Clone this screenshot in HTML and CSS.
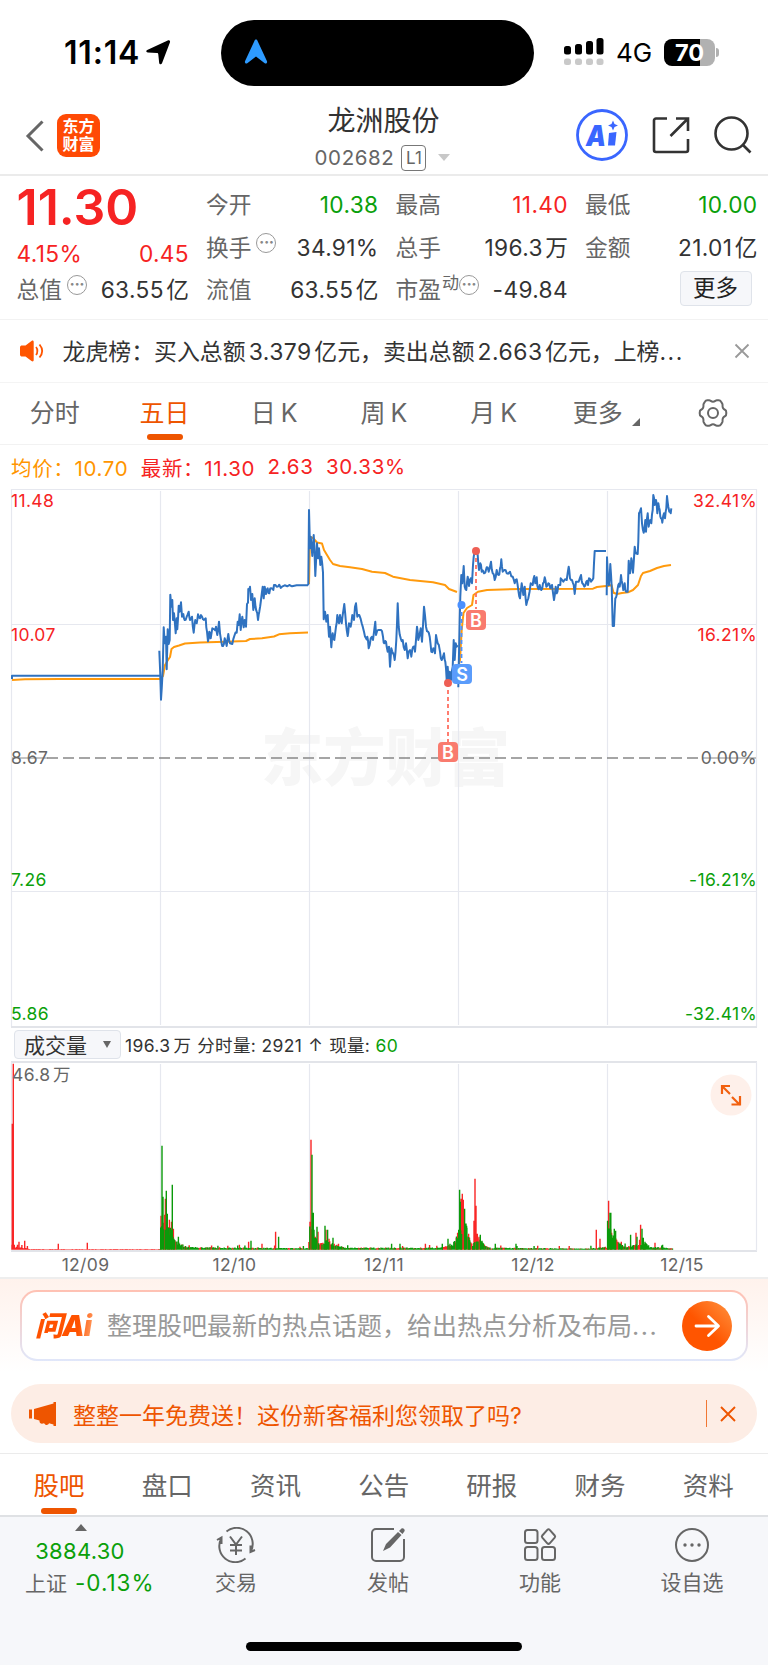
FILE: index.html
```html
<!DOCTYPE html>
<html lang="zh-CN">
<head>
  <meta charset="UTF-8">
  <title>龙洲股份 002682</title>
  <link rel="stylesheet" href="styles.css">
</head>
<body>

  <!-- Status bar -->
  <div class="status">
    <div class="clock">11:14
      <svg width="25" height="25" viewBox="0 0 25 25"><path d="M24 2.200 16 23.200c-.6 1.500-2.600 1.300-2.800-.2l-.9-8.600c-.1-.9-.6-1.300-1.400-1.300L1.800 12.600c-1.700-.2-2-1.800-.6-2.500L21.700.500c1.500-.6 2.700.3 2.300 1.700z"/></svg>
    </div>
    <div class="island">
      <svg width="24" height="26" viewBox="0 0 24 26"><path fill="#2e9bff" d="M12 .5c.9 0 1.300.6 1.700 1.700L22.900 22c.8 2-.8 3.300-2.500 2L12 17.500 3.600 24c-1.700 1.300-3.300 0-2.500-2L10.300 2.200C10.700 1.100 11.100.5 12 .5z"/></svg>
    </div>
    <div class="signal">
      <svg width="41" height="28" viewBox="0 0 41 28">
        <g fill="#000"><rect x="0" y="8" width="7" height="8.500" rx="2.500"/><rect x="11" y="6" width="7" height="10.500" rx="2.500"/><rect x="22" y="3" width="7" height="13.500" rx="2.500"/><rect x="32.500" y="0" width="7" height="16.500" rx="2.500"/></g>
        <g fill="#c9c9c9"><rect x="0" y="20.500" width="7" height="6.500" rx="2.500"/><rect x="11" y="20.500" width="7" height="6.500" rx="2.500"/><rect x="22" y="20.500" width="7" height="6.500" rx="2.500"/><rect x="32.500" y="20.500" width="7" height="6.500" rx="2.500"/></g>
      </svg>
      <span class="net">4G</span>
      <span class="battery">70</span><span class="nub"></span>
    </div>
  </div>

  <!-- Title bar -->
  <div class="navbar">
    <div class="nav-left">
      <svg width="20" height="34" viewBox="0 0 20 34"><path d="M17.500 2.500 3 17l14.500 14.500" fill="none" stroke="#666" stroke-width="3"/></svg>
      <div class="logo">东方<br>财富</div>
    </div>
    <div class="nav-title">
      <h1>龙洲股份</h1>
      <p>002682 <span class="level">L1</span><i class="caret"></i></p>
    </div>
    <div class="nav-right">
      <svg width="52" height="52" viewBox="0 0 52 52"><circle cx="26" cy="26" r="24.500" fill="#fff" stroke="#3a66ff" stroke-width="2.800"/><text x="10" y="36.500" class="ai" textLength="20" lengthAdjust="spacingAndGlyphs">A</text><path d="m33 24 7.500-1-1.500 13.500h-7z" fill="#3a66ff"/><path d="m37 11.500 1.500 3.500 3.500 1.500-3.500 1.500-1.500 3.500-1.500-3.500-3.500-1.500 3.500-1.500z" fill="#3a66ff"/></svg>
      <svg width="38" height="38" viewBox="0 0 38 38" fill="none" stroke="#333" stroke-width="2.600"><path d="M15 2.500H4a2 2 0 0 0-2 2V34a2 2 0 0 0 2 2h30a2 2 0 0 0 2-2V23M24 2.500h12V15M36 2.500 18.500 20"/></svg>
      <svg width="38" height="38" viewBox="0 0 38 38" fill="none" stroke="#333" stroke-width="2.600"><circle cx="17.500" cy="17.500" r="16"/><path d="m29 29 7.500 7.500"/></svg>
    </div>
  </div>

  <!-- Quote -->
  <div class="quote">
    <div class="col main">
      <div class="price">11.30</div>
      <div class="row change"><b>4.15%</b><b>0.45</b></div>
      <div class="row"><span>总值<i class="more-dot">···</i></span><b>63.55<em>亿</em></b></div>
    </div>
    <div class="col">
      <div class="row"><span>今开</span><b class="down">10.38</b></div>
      <div class="row"><span>换手<i class="more-dot">···</i></span><b>34.91%</b></div>
      <div class="row"><span>流值</span><b>63.55<em>亿</em></b></div>
    </div>
    <div class="col">
      <div class="row"><span>最高</span><b class="up">11.40</b></div>
      <div class="row"><span>总手</span><b>196.3<em>万</em></b></div>
      <div class="row"><span>市盈<sup>动</sup><i class="more-dot tight">···</i></span><b>-49.84</b></div>
    </div>
    <div class="col">
      <div class="row"><span>最低</span><b class="down">10.00</b></div>
      <div class="row"><span>金额</span><b>21.01<em>亿</em></b></div>
      <div class="row end"><button class="more-btn">更多</button></div>
    </div>
  </div>

  <!-- News strip -->
  <div class="news">
    <svg width="26" height="22" viewBox="0 0 26 22"><path fill="#ff5500" d="M1 7.500C1 6 2 5.500 3 5.500h3.500L12.500 1c1.200-.9 2.200-.4 2.200 1v18c0 1.400-1 1.900-2.200 1l-6-4.500H3c-1 0-2-.5-2-2z"/><path d="M17 7c1.800 2 1.800 6 0 8M20.500 4.500c3.300 4 3.300 9 0 13" fill="none" stroke="#ff5500" stroke-width="1.800"/></svg>
    <p>龙虎榜：买入总额<em>3.379</em>亿元，卖出总额<em>2.663</em>亿元，上榜<span class="dots">...</span></p>
    <svg class="x" width="16" height="16" viewBox="0 0 16 16"><path d="m1.500 1.500 13 13m0-13-13 13" stroke="#999" stroke-width="1.800"/></svg>
  </div>

  <!-- Period tabs -->
  <div class="periods">
    <span>分时</span>
    <span class="active">五日</span>
    <span>日<em>K</em></span>
    <span>周<em>K</em></span>
    <span>月<em>K</em></span>
    <span class="drop">更多<i class="corner"></i></span>
    <span><svg width="32" height="30" viewBox="0 0 32 30" fill="none" stroke="#666" stroke-width="2"><path d="M10.200 2.200h2c1.300 0 1.800 1.500 3.800 1.500s2.500-1.500 3.800-1.500h2c1.200 0 1.800.6 2.300 1.500l1.200 2c.7 1.300-.3 2.300.7 4.300s2.400 1.500 3 2.700c.4 1.400.4 3.200 0 4.600-.6 1.200-2 .7-3 2.700s0 3-.7 4.300l-1.200 2c-.5.900-1.100 1.500-2.300 1.500h-2c-1.300 0-1.800-1.500-3.800-1.500s-2.500 1.500-3.800 1.500h-2c-1.200 0-1.800-.6-2.300-1.500l-1.200-2c-.7-1.300.3-2.300-.7-4.300s-2.400-1.500-3-2.700c-.4-1.400-.4-3.200 0-4.600.6-1.200 2-.7 3-2.700s0-3 .7-4.300l1.200-2c.5-.9 1.100-1.500 2.300-1.500z"/><circle cx="16" cy="15" r="5"/></svg></span>
  </div>

  <div class="legend">
    <span class="avg">均价：10.70</span><span>最新：11.30</span><span>2.63</span><span>30.33%</span>
  </div>

  <!-- Five day price chart -->
  <svg class="chart" width="768" height="541" viewBox="0 488 768 541">
    <text x="261" y="781" class="watermark" textLength="249" lengthAdjust="spacingAndGlyphs">东方财富</text>
    <g class="grid">
      <path d="M11.500 489.500H757M11.500 624.500H757M11.500 891.500H757M11.500 489v538M756.500 489v538"/>
      <path d="M160.500 491v534M309.500 491v534M458.500 491v534M607.500 491v534"/>
      <path class="frame" d="M11 1027H757"/>
    </g>
    <path class="zero" d="M47 758H700"/>
    <path class="zero solid" d="M12 758h36M702 758h54"/>
    <g class="avg-line">
      <polyline points="12,680 25,679.300 60,679 160,679"/>
      <polyline points="160,679 163,676 165,665 168,660 170,657 171.500,649 174,647 179,645.500 185,643.500 200,642.500 225,641.800 246,641 250,639 262,638.300 274,636.500 279,634.300 290,633.200 308,632.500"/>
      <polyline points="309,584 310,537 313,538 317,542.500 322,543.500 324,550 330,560 333,564 340,566 350,567.300 362,569 372,571.700 385,573 393,576.700 410,580 433,582.300 445,585 449,589 457,592"/>
      <polyline points="458,668 460,660 461.700,630 463.500,613 467,608 472,605 473.500,595 478,591.700 487,590 520,589 593,588.700 597,587 606,586"/>
      <polyline points="607,586.300 611.500,585 613.500,592.700 617,594 622,593 628,592.300 633,590 638,585 641,576 643,573 650,571 657,568 664,566 671,565"/>
    </g>
    <g class="price-line" id="priceLines"></g>
    <g class="labels">
      <g class="up"><text x="11" y="507">11.48</text><text x="11" y="641">10.07</text><text x="757" y="507" class="r">32.41%</text><text x="757" y="641" class="r">16.21%</text></g>
      <g><text x="11" y="764">8.67</text><text x="757" y="764" class="r">0.00%</text></g>
      <g class="down"><text x="11" y="886">7.26</text><text x="11" y="1020">5.86</text><text x="757" y="886" class="r">-16.21%</text><text x="757" y="1020" class="r">-32.41%</text></g>
    </g>
    <!-- trade marks -->
    <g class="marks">
      <path d="M476 551v58M448 683v60" stroke="#ff6f61"/>
      <path d="M461.500 605v58" stroke="#4a90ff"/>
      <circle cx="476" cy="551" r="4" fill="#ee5f55"/><circle cx="448" cy="683" r="4" fill="#ee5f55"/><circle cx="461.500" cy="605" r="4" fill="#4a90ff"/>
      <rect x="466" y="610" width="20" height="20" rx="4" fill="#f97b6e"/><text x="476" y="626.500">B</text>
      <rect x="438" y="742" width="20" height="20" rx="4" fill="#f97b6e"/><text x="448" y="758.500">B</text>
      <rect x="452" y="664" width="20" height="20" rx="4" fill="#5a9cfb"/><text x="462" y="680.500">S</text>
    </g>
  </svg>

  <div class="vol-head">
    <button class="select">成交量<i></i></button>
    <span>196.3<em>万</em></span><span>分时量: 2921</span><span>↑</span><span>现量: <b class="down">60</b></span>
  </div>

  <!-- Volume -->
  <svg class="volume" width="768" height="216" viewBox="0 1061 768 216">
    <g class="grid">
      <path class="frame" d="M11 1062H757M11 1251H757"/>
      <path d="M11.500 1062v189M756.500 1062v189M160.500 1064v186M309.500 1064v186M458.500 1064v186M607.500 1064v186"/>
    </g>
    <path class="bars" id="volUp" stroke="#f92626"/>
    <path class="bars" id="volDown" stroke="#0a9a0a"/>
    <g class="labels"><text x="12" y="1081">46.8</text><text x="53" y="1081">万</text>
      <g class="dates"><text x="85.500" y="1270.500">12/09</text><text x="234.500" y="1270.500">12/10</text><text x="384" y="1270.500">12/11</text><text x="533" y="1270.500">12/12</text><text x="682" y="1270.500">12/15</text></g>
    </g>
    <circle cx="731" cy="1095" r="20.500" fill="#fef0ea"/>
    <path d="M722 1094v-8h8M722 1086l8 8M732 1097l8 8M740 1096v8.500h-8.500" fill="none" stroke="#f2600f" stroke-width="2.200"/>
  </svg>

  <!-- Ask AI -->
  <div class="ask-wrap">
    <div class="ask">
      <strong>问Ai</strong>
      <p>整理股吧最新的热点话题，给出热点分析及布局<span class="dots">...</span></p>
      <div class="go"><svg width="28" height="24" viewBox="0 0 28 24" fill="none" stroke="#fff" stroke-width="2.800" stroke-linecap="round" stroke-linejoin="round"><path d="M3 12h22M15.500 2.500 25.500 12l-10 9.500"/></svg></div>
    </div>
  </div>

  <div class="promo">
    <svg width="28" height="26" viewBox="0 0 28 26" fill="#ee5500"><path d="M0 8.500h3v9H0zM5 8 24.500 2.500V1H27v24h-2.500v-1.500L20 22.200c-.5 1.500-2 2-3.500 1.500l-1.500-1.500-2 .5c-1.500 0-2.500-1-2.500-2.500v-.8L5 18z"/></svg>
    <p>整整一年免费送！这份新客福利您领取了吗?</p>
    <i></i>
    <svg width="16" height="16" viewBox="0 0 16 16"><path d="m1 1 14 14m0-14L1 15" stroke="#ee5500" stroke-width="1.900"/></svg>
  </div>

  <div class="sections">
    <span class="active">股吧</span><span>盘口</span><span>资讯</span><span>公告</span><span>研报</span><span>财务</span><span>资料</span>
  </div>

  <!-- Bottom bar -->
  <div class="bottom">
    <div class="index">
      <i></i>
      <b>3884.30</b>
      <p>上证 <b>-0.13%</b></p>
    </div>
    <div class="tool">
      <svg width="40" height="36" viewBox="0 0 40 36" fill="none" stroke="#666" stroke-width="2"><path d="M10.500 4.500A16 16 0 0 1 35 24l-.5 1M29.500 31.500A16 16 0 0 1 5 12l.5-1M1 13l4.500-2.500V17M39 23l-4.500 2V18.500M14 9.500l6 8 6-8M14 18h12M14 23.500h12M20 18v10"/></svg>
      <span>交易</span>
    </div>
    <div class="tool">
      <svg width="36" height="36" viewBox="0 0 36 36" fill="none" stroke="#666" stroke-width="2"><path d="M24 2H6a4 4 0 0 0-4 4v24a4 4 0 0 0 4 4h24a4 4 0 0 0 4-4V12"/><path fill="#666" stroke="none" d="m13 24 3-7L28 5l3.500 3L20 20.500zM29 4l2.500-2.500c1.500-1 4 1 3 2.700L32.500 7z"/></svg>
      <span>发帖</span>
    </div>
    <div class="tool">
      <svg width="36" height="36" viewBox="0 0 36 36" fill="none" stroke="#666" stroke-width="2"><rect x="3" y="3" width="12.500" height="13" rx="2.500"/><rect x="3" y="20" width="12.500" height="13" rx="2.500"/><rect x="20" y="20" width="13" height="13" rx="2.500"/><path d="m25.300 2.900-5 5.600a1.700 1.700 0 0 0 0 2.200l5 5.600a1.700 1.700 0 0 0 2.400 0l5-5.600a1.700 1.700 0 0 0 0-2.200l-5-5.600a1.700 1.700 0 0 0-2.400 0z"/></svg>
      <span>功能</span>
    </div>
    <div class="tool">
      <svg width="36" height="36" viewBox="0 0 36 36" fill="#666"><circle cx="18" cy="18" r="16" fill="none" stroke="#666" stroke-width="2"/><circle cx="11" cy="18" r="1.700"/><circle cx="18" cy="18" r="1.700"/><circle cx="25" cy="18" r="1.700"/></svg>
      <span>设自选</span>
    </div>
    <div class="home"></div>
  </div>

  <script src="chart.js"></script>
</body>
</html>
```
FILE: styles.css
```css
* {
  box-sizing: border-box;
}
body {
  margin: 0;
  width: 768px;
  height: 1665px;
  overflow: hidden;
  background: #fff;
  color: #333;
  font-family: Inter, "Noto Sans CJK SC", sans-serif;
}
h1, p {
  margin: 0;
  font-weight: 400;
}
i, em {
  font-style: normal;
}
svg {
  display: block;
  flex: none;
}
button {
  font-family: inherit;
  color: #222;
  border: 1.500px solid #dfe3ea;
  background: #f6f7fa;
  border-radius: 4px;
}
.up { color: #f62323; fill: #f62323; }
.down { color: #0aa00a; fill: #0aa00a; }
.dots { letter-spacing: 1.500px; }

/* status bar */
.status {
  height: 96px;
  display: grid;
  grid-template-columns: 221px 313px 1fr;
}
.clock {
  display: flex;
  align-items: center;
  gap: 6px;
  padding: 9px 0 0 64px;
  font-size: 32px;
  font-weight: 600;
  letter-spacing: .8px;
  color: #000;
}
.island {
  height: 66px;
  margin-top: 20px;
  padding: 19px 23px;
  border-radius: 33px;
  background: #000;
}
.signal {
  display: flex;
  align-items: center;
  padding: 8px 0 0 30px;
  color: #000;
}
.net {
  width: 48px;
  margin-left: 11px;
  padding-top: 1px;
  font-size: 26px;
}
.battery {
  width: 51px;
  height: 27px;
  border-radius: 8px;
  background: linear-gradient(90deg, #000 70%, #b1b1b1 70%);
  color: #fff;
  font-size: 23.500px;
  font-weight: 700;
  line-height: 27px;
  text-align: center;
}
.nub {
  width: 3px;
  height: 9px;
  margin-left: 1px;
  border-radius: 0 3px 3px 0;
  background: #b1b1b1;
}

/* title bar */
.navbar {
  height: 80px;
  display: grid;
  grid-template-columns: 220px 1fr 220px;
  border-bottom: 2px solid #ebebeb;
}
.nav-left {
  display: flex;
  align-items: center;
  gap: 12px;
  padding: 1px 0 0 25px;
}
.logo {
  width: 43px;
  height: 43px;
  padding-top: 3px;
  border-radius: 9px;
  background: #ff4a05;
  color: #fff;
  font-size: 16px;
  font-weight: 700;
  line-height: 18px;
  text-align: center;
}
.nav-left, .nav-right {
  height: 78px;
}
.nav-title {
  text-align: center;
}
.nav-title h1 {
  font-size: 28px;
  line-height: 34px;
  margin: 8px 1px 0 0;
}
.nav-title p {
  display: flex;
  align-items: center;
  justify-content: center;
  height: 36px;
  padding: 3px 3px 0 0;
  color: #666;
  font-size: 20.500px;
  letter-spacing: .6px;
  line-height: 28px;
}
.level {
  margin-left: 7px;
  width: 25px;
  height: 26px;
  border: 1.500px solid #777;
  border-radius: 4px;
  font-size: 17px;
  letter-spacing: 0;
  line-height: 24px;
}
.caret {
  margin-left: 12px;
  border: 6px solid transparent;
  border-top: 7px solid #c8c8c8;
  border-bottom: 0;
}
.nav-right {
  display: flex;
  align-items: center;
  justify-content: flex-end;
  gap: 24px;
  padding: 0 16.500px 0 0;
}
.ai {
  font: italic 900 28px Inter, sans-serif;
  fill: #3a66ff;
}

/* quote */
.quote {
  height: 144px;
  display: grid;
  grid-template-columns: repeat(4, 171.500px);
  column-gap: 18px;
  padding: 7px 0 0 16.500px;
  border-bottom: 1.500px solid #f2f2f2;
}
.row {
  height: 42.700px;
  display: flex;
  align-items: center;
  justify-content: space-between;
  font-size: 22.700px;
  line-height: 43px;
}
.row span {
  display: flex;
  align-items: center;
  color: #666;
}
.row b {
  margin-right: -1px;
  font-weight: 400;
  letter-spacing: .35px;
}
.row b em {
  margin-left: 2.500px;
  letter-spacing: 0;
}
.price {
  height: 50.500px;
  color: #f62323;
  font-size: 50px;
  font-weight: 600;
  line-height: 48px;
  letter-spacing: 0;
}
.change {
  height: 34.500px;
  padding-top: 6px;
  color: #f62323;
}
.more-dot {
  width: 20px;
  height: 20px;
  margin: -9px 0 0 5px;
  border: 1.500px solid #999;
  border-radius: 50%;
  color: #888;
  font-size: 16px;
  font-weight: 700;
  line-height: 17px;
  text-align: center;
  letter-spacing: -.5px;
}
.more-dot.tight {
  margin-left: 0;
}
.row sup {
  font-size: 17px;
  line-height: 20px;
  margin: -13px 0 0 1px;
}
.row.end {
  justify-content: flex-end;
  padding: 0 5px 3px 0;
}
.more-btn {
  width: 72px;
  height: 35px;
  padding: 0;
  font-size: 22.500px;
  line-height: 30px;
}

/* news */
.news {
  height: 62.500px;
  display: flex;
  align-items: center;
  padding: 0 18px 0 19px;
  border-bottom: 1.500px solid #f4f4f4;
  font-size: 22.900px;
}
.news p {
  margin: -2px 0 0 17.500px;
  flex: 1;
  white-space: nowrap;
}
.news em {
  margin: 0 2.500px 0 3px;
  letter-spacing: .5px;
}

/* period tabs */
.periods {
  height: 62.500px;
  display: grid;
  grid-template-columns: repeat(7, 109.700px);
  border-bottom: 1.500px solid #f2f2f2;
  color: #666;
  font-size: 25px;
  line-height: 61px;
}
.periods span {
  position: relative;
  display: flex;
  align-items: center;
  justify-content: center;
}
.periods em {
  margin-left: 5px;
}
.periods .drop {
  padding-right: 11px;
}
.periods .active, .sections .active {
  color: #ee5500;
}
.periods .active::after, .sections .active::after {
  content: "";
  position: absolute;
  left: calc(50% - 18px);
  bottom: 4px;
  width: 36px;
  height: 6px;
  border-radius: 3px;
  background: #ee5500;
}
.corner {
  position: absolute;
  right: 18px;
  bottom: 18px;
  border-left: 8px solid transparent;
  border-bottom: 8px solid #666;
}

.legend {
  height: 43px;
  display: flex;
  align-items: center;
  gap: 12.500px;
  padding-left: 11px;
  color: #f62323;
  font-size: 20.500px;
  letter-spacing: .65px;
}
.legend .avg {
  color: #ff9500;
}

/* charts */
.grid path {
  fill: none;
  stroke: #e6e8ef;
  stroke-width: 1.200;
}
.grid .frame {
  stroke: #e2e4e9;
  stroke-width: 2;
}
.watermark {
  font-size: 62px;
  font-weight: 900;
  fill: #f6f6f6;
}
.zero {
  stroke: #888;
  stroke-width: 1.500;
  stroke-dasharray: 11 5;
}
.zero.solid {
  stroke-dasharray: none;
  stroke-width: 1;
}
.avg-line, .price-line {
  fill: none;
  stroke: #ff9a0d;
  stroke-width: 2;
  stroke-linejoin: round;
}
.price-line {
  stroke: #2f72c0;
}
.labels {
  font-size: 17.500px;
  letter-spacing: .35px;
  fill: #666;
}
.labels .r {
  text-anchor: end;
}
.dates {
  font-size: 17.500px;
  text-anchor: middle;
}
.marks path {
  stroke-width: 1.800;
  stroke-dasharray: 4 3;
}
.marks text {
  fill: #fff;
  font-size: 18px;
  font-weight: 600;
  text-anchor: middle;
}
.vol-head {
  height: 32px;
  display: flex;
  align-items: center;
  gap: 6px;
  padding: 0 0 2px 14px;
  font-size: 17.500px;
  letter-spacing: .35px;
}
.vol-head .select {
  width: 107px;
  height: 29px;
  display: flex;
  align-items: center;
  justify-content: space-between;
  margin-right: -2px;
  padding: 0 9px;
  font-size: 21px;
  color: #333;
}
.select i {
  border: 4.500px solid transparent;
  border-top: 7px solid #666;
  border-bottom: 0;
}
.vol-head em {
  margin-left: 3px;
}
.vol-head b {
  font-weight: 400;
}
.bars {
  stroke-width: 1.400;
}

/* ask */
.ask-wrap {
  height: 95px;
  padding: 11px 20px 0;
  border-top: 2px solid #eee;
  background: linear-gradient(#fff2ec, #fff);
}
.ask {
  height: 71px;
  display: flex;
  align-items: center;
  padding: 0 14px 0 13px;
  border: 2px solid transparent;
  border-radius: 17px;
  background: linear-gradient(#fff, #fff) padding-box, linear-gradient(#ffc1b3, #e0e7fa) border-box;
}
.ask strong {
  width: 72px;
  margin-top: -3px;
  font-size: 28px;
  font-style: italic;
  font-weight: 900;
  letter-spacing: -.7px;
  background: linear-gradient(100deg, #ff5200 60%, #ff9a60 78%);
  background-clip: text;
  color: transparent;
}
.ask p {
  flex: 1;
  margin-top: -3px;
  color: #999;
  font-size: 25px;
  white-space: nowrap;
}
.go {
  width: 50px;
  height: 50px;
  border-radius: 50%;
  padding: 13px 11px;
  background: linear-gradient(45deg, #ff5500 45%, #ff9440);
}
.promo {
  height: 59px;
  display: flex;
  align-items: center;
  margin: 12px 11px 0;
  padding: 0 21px 0 18px;
  border-radius: 30px;
  background: #fdede5;
  color: #ee5500;
  font-size: 23px;
}
.promo p {
  flex: 1;
  margin-left: 16px;
}
.promo i {
  width: 1.500px;
  height: 27px;
  margin-right: 13px;
  background: #f17733;
}

/* section tabs */
.sections {
  height: 64px;
  display: grid;
  grid-template-columns: repeat(7, 108.200px);
  margin-top: 10px;
  padding-left: 5px;
  border-top: 1.500px solid #ebebeb;
  border-bottom: 2px solid #dfe1e4;
  color: #666;
  font-size: 25.500px;
  line-height: 64px;
  text-align: center;
}
.sections span {
  position: relative;
}

/* bottom bar */
.bottom {
  position: relative;
  height: 148px;
  display: grid;
  grid-template-columns: 160px repeat(4, 152px);
  background: #f6f7fa;
  font-size: 21px;
  color: #666;
  text-align: center;
}
.index {
  padding: 7px 0 0 19px;
}
.index i {
  display: block;
  width: 12px;
  margin: 0 auto 3px 56px;
  border: 6px solid transparent;
  border-bottom: 7px solid #666;
  border-top: 0;
}
.index b {
  color: #0aa00a;
  font-weight: 400;
  font-size: 22px;
  letter-spacing: .3px;
}
.index > b {
  display: block;
  padding-right: 19px;
  line-height: 34px;
}
.index p {
  text-align: left;
  padding-left: 6px;
  line-height: 30px;
  white-space: nowrap;
}
.index p b {
  margin-left: 2px;
  font-size: 22.500px;
  letter-spacing: 1px;
}
.tool {
  display: flex;
  flex-direction: column;
  align-items: center;
  padding-top: 10px;
}
.tool span {
  margin-top: 5px;
  line-height: 30px;
}
.home {
  position: absolute;
  left: 246px;
  bottom: 14px;
  width: 276px;
  height: 9px;
  border-radius: 5px;
  background: #000;
}
```
FILE: chart.js
```js
// price points per day, 1/3 px units from (x0, y0)
const days = [
  { x0: 0, y0: 440, p: "36,717 36,707 480,707" },
  { x0: 0, y0: 440, p: "478,632 483,779 488,690 491,562 494,610 498,590 500,688 503,568 506,612 509,600 511,464 514,500 517,480 519,540 522,520 527,580 530,535 532,568 536,497 539,515 543,487 546,530 550,522 554,540 560,530 566,515 570,540 576,530 581,578 586,540 590,550 594,523 600,535 606,530 612,540 617,535 621,575 624,604 628,575 632,595 637,565 643,568 648,560 652,585 657,545 660,580 664,605 669,618 674,595 680,618 685,582 690,610 697,612 703,588 710,578 713,545 716,555 719,523 722,570 727,530 731,562 734,540 738,560 741,492 744,488 745,447 750,440 753,480 757,462 760,510 764,475 769,512 774,540 778,515 783,480 788,440 791,475 794,440 798,462 803,445 808,460 813,445 820,450 822,435 830,440 838,434 846,440 854,436 862,439 868,435 876,439 890,436 924,436" },
  { x0: 300, y0: 480, p: "24,316 25,312 27,90 30,205 32,170 34,190 37,228 41,165 43,195 46,288 51,190 54,235 57,205 61,255 64,230 69,278 71,418 75,395 79,425 83,405 87,470 90,440 94,502 98,460 103,480 108,440 112,405 117,430 120,405 125,430 128,405 133,372 138,430 143,468 147,430 152,440 157,405 162,420 165,380 168,370 172,410 178,405 185,430 192,455 198,475 202,470 206,505 212,475 219,480 226,425 228,465 235,450 243,450 249,470 253,490 258,485 263,515 267,500 270,560 274,505 279,520 284,540 289,480 293,370 296,440 302,475 308,480 314,510 318,490 323,535 330,510 334,530 340,500 345,515 351,440 355,480 362,445 366,485 372,380 378,440 384,455 389,470 394,515 400,505 405,520 408,465 413,490 420,515 425,540 432,520 436,545 440,600 443,560 446,605 449,575 453,600 458,560 461,480 464,540 467,490 473,496" },
  { x0: 300, y0: 480, p: "475,622 477,520 479,420 481,350 484,285 487,310 491,258 494,320 499,330 503,290 507,318 512,295 516,310 519,255 523,220 528,212 533,225 537,270 541,250 545,275 552,280 560,262 566,275 573,245 578,280 584,300 590,270 596,285 600,265 604,238 608,275 614,270 620,280 630,275 638,290 644,310 650,298 655,330 660,355 665,310 670,345 674,320 679,375 685,355 692,310 698,315 703,288 706,310 710,292 714,325 719,315 724,330 729,310 734,292 739,320 745,310 751,325 756,315 762,360 767,320 770,340 775,315 781,315 782,295 790,305 800,300 806,260 810,295 816,300 821,315 824,342 828,305 836,305 843,285 847,310 853,320 859,305 864,315 867,295 873,305 880,295 884,213 918,213" },
  { x0: 500, y0: 470, p: "320,376 321,262 324,325 327,345 331,282 335,350 338,468 342,468 346,385 350,375 355,345 359,350 363,315 367,340 370,360 374,340 378,365 383,365 386,272 390,310 394,265 399,308 404,230 407,250 413,252 415,215 417,130 423,115 426,160 431,188 436,150 438,185 443,130 446,170 451,150 454,160 458,120 460,75 464,105 468,90 472,130 475,100 479,120 483,145 487,158 492,130 495,145 499,115 501,78 505,110 508,125 512,130 514,115" }
];

let seed = 7;
function rnd() {
  seed = (seed * 16807) % 2147483647;
  return seed / 2147483647;
}

// split long steps in two with a little jitter
function tickPath(day) {
  const pts = day.p.split(" ").map(s => s.split(",").map(Number));
  const out = [];
  pts.forEach(([x, y], i) => {
    if (i) {
      const [px, py] = pts[i - 1];
      if (x - px > 3 && x - px < 12 && Math.abs(y - py) > 4) {
        const j = (rnd() - .5) * 16;
        out.push([(px + x) / 2, (py + y) / 2 + j]);
      }
    }
    out.push([x, y]);
  });
  return out.map(([x, y]) => (day.x0 + x / 3).toFixed(1) + "," + (day.y0 + y / 3).toFixed(1)).join(" ");
}

document.getElementById("priceLines").innerHTML =
  days.map(d => `<polyline points="${tickPath(d)}"/>`).join("");

// volume bars: [x, height], px
const BASE = 1249.700;
const up = [[12.3,126],[13.3,186],[14.3,5],[17.5,5],[19,8],[24.7,9],[58.3,6],[87.3,7],
  [161,34],[163.8,27],[164.6,35],[165.4,51],[169.4,30],[171.5,28],[173.4,21],[239.4,5],[248.6,8],[262,6],[275.6,18],[300,3],
  [310,28],[311,110],[315.3,13],[318,18],[326,20],[329,11],[338.5,6],[425.4,6],
  [456.3,12],[457.6,17],[461,51],[462.3,56],[463.3,50],[468.6,16],[469.5,12],[474,29],[475,71],[476,44],[477.3,16],[479,13],
  [596.3,20],[600,11],[608.6,49],[611.6,17],[616.6,10],[621.3,8],[636,17],[639.6,10],[640.6,25],[655,7]];
const down = [[162,104],[163,53],[166.3,59],[167.3,36],[168,22],[170.3,22],[172.3,65],[174.3,10],[178.4,13],[251,9],[278.6,13],
  [312,95],[313.3,37],[314,20],[317,23],[325,24],[327.6,20],[333,12],[391.600,6],[400,6],[442.3,6],[448,11],[450,6],
  [458.7,20],[459.6,60],[460.3,48],[464.6,41],[465.6,26],[466.6,24],[480.3,15],[482,9],[495.3,6],[516,6],
  [607.6,29],[610,37],[610.8,37],[613,12],[614.3,21],[615.6,19],[630.6,15],[637,13],[642,21],[643.3,12],[645,8],[662.6,5]];

// background activity, [x, level] breakpoints
const env = [[12,3],[22,2.500],[30,.6],[160,.6],[160.7,22],[172,20],[175,10],[182,5],[190,2.500],[308,1.500],
  [310,26],[316,12],[322,6],[327,10],[336,5],[345,2],[440,2],[452,5],[458,16],[466,24],[470,9],[473,5],[478,12],[485,4],[490,2],[590,1.200],
  [607,3],[608,25],[614,14],[617,8],[627,3],[640,7],[645,7],[650,3],[673,1.500]];
for (let k = 1; k < env.length; k++) {
  const [xa, ha] = env[k - 1], [xb, hb] = env[k];
  for (let x = xa; x < xb; x += .9) {
    const level = ha + (hb - ha) * (x - xa) / (xb - xa);
    const h = level * (.6 + rnd() * .5) + (rnd() > .93 && level > 1 && level < 4 ? 2.500 : 0);
    const red = x < 160 || rnd() > .68;
    (red ? up : down).push([x, h]);
  }
}
const bars = list => list.map(([x, h]) => `M${x.toFixed(1)} ${BASE}v${(-h).toFixed(1)}`).join("");
document.getElementById("volUp").setAttribute("d", bars(up));
document.getElementById("volDown").setAttribute("d", bars(down));
```
